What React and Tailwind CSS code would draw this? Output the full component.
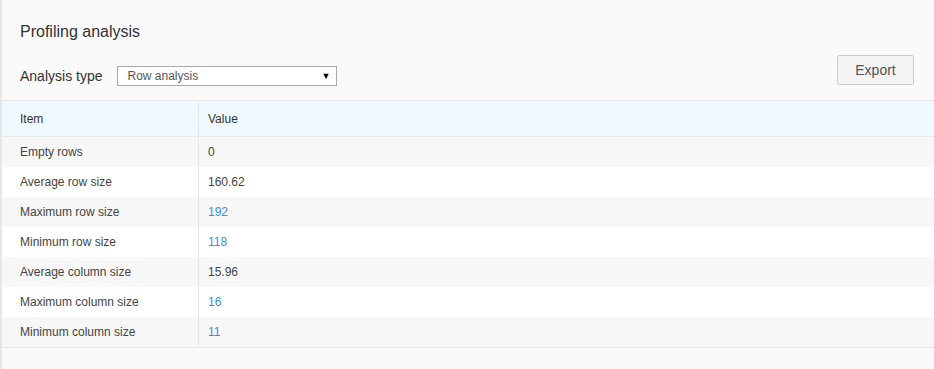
import React from "react";

const rows = [
  { item: "Empty rows", value: "0", link: false },
  { item: "Average row size", value: "160.62", link: false },
  { item: "Maximum row size", value: "192", link: true },
  { item: "Minimum row size", value: "118", link: true },
  { item: "Average column size", value: "15.96", link: false },
  { item: "Maximum column size", value: "16", link: true },
  { item: "Minimum column size", value: "11", link: true },
];

const App = () => {
  return (
    <div
      className="min-h-[369px] w-full bg-[#fafafa] border-l-2 border-[#e6e6e6] text-[#333]"
      style={{ fontFamily: '"Liberation Sans", Arial, sans-serif' }}
    >
      <div className="pl-[18px] pr-[20px] pt-[22px] pb-[14px]">
        <h2 className="text-[16px] leading-[20px] font-normal text-[#333]">
          Profiling analysis
        </h2>
        <div className="mt-[13px] flex items-end justify-between">
          <div className="flex items-center">
            <span className="text-[14px] leading-[20px] text-[#333]">
              Analysis type
            </span>
            <div className="ml-[15px] flex h-[20px] w-[220px] items-center justify-between border border-[#a9a9a9] bg-white pl-[9px] pr-[6px]">
              <span className="text-[12px] text-[#555]">Row analysis</span>
              <span className="text-[9px] leading-none text-black">▼</span>
            </div>
          </div>
          <button className="mb-[1px] h-[30px] w-[77px] rounded-[2px] border border-[#ccc] bg-[#f4f4f4] text-[14px] text-[#555]">
            Export
          </button>
        </div>
      </div>

      <div className="border-t border-b border-[#e8e8e8] text-[12px]">
        <div className="flex h-[36px] items-center border-b border-[#e8e8e8] bg-[#f0f9ff]">
          <div className="flex h-full w-[197px] items-center border-r border-[#e8e8e8] pl-[18px]">
            Item
          </div>
          <div className="pl-[9px]">Value</div>
        </div>
        {rows.map((r, i) => (
          <div
            key={r.item}
            className={`flex h-[30px] items-center ${
              i % 2 === 0 ? "bg-[#f7f7f7]" : "bg-white"
            }`}
          >
            <div className="flex h-full w-[197px] items-center border-r border-[#e8e8e8] pl-[18px] text-[#444]">
              {r.item}
            </div>
            <div
              className={`pl-[9px] ${r.link ? "text-[#3a8ee6]" : "text-[#444]"}`}
            >
              {r.value}
            </div>
          </div>
        ))}
      </div>
    </div>
  );
};

export default App;
